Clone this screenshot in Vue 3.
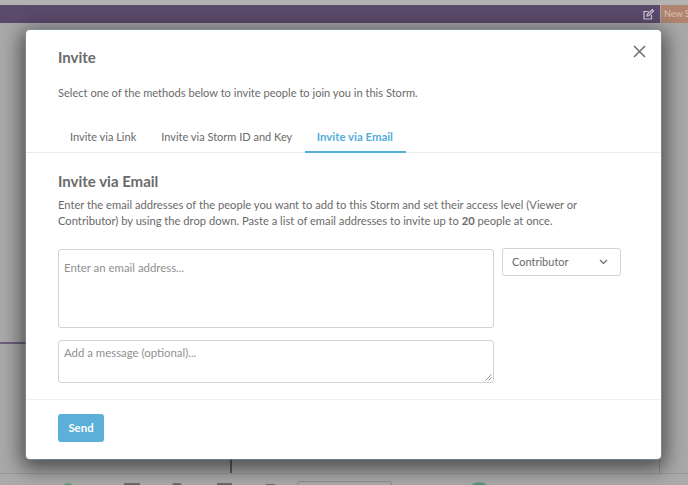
<template>
  <div class="page">
    <header class="topbar">
      <svg class="edit" width="11" height="11" viewBox="0 0 11 11" fill="none" stroke="#cfc9d5" stroke-width="1.2"><path d="M8.5 6V10H1V2.5H5.5" /><path d="M4 7L4.5 5L9.3 0.6L10.5 1.8L5.8 6.6Z" /></svg>
      <span class="new">New S</span>
    </header>
    <div class="backdrop-line"></div>
    <div class="stem"></div>
    <div class="right-rule"></div>
    <footer class="bottombar">
      <span class="dot green"></span>
      <span class="tool t1"></span>
      <span class="tool t2"></span>
      <span class="tool t3"></span>
      <span class="tool t4"></span>
      <span class="field"></span>
      <span class="globe"></span>
    </footer>

    <section class="modal">
      <button class="close" aria-label="Close">
        <svg width="13" height="13" viewBox="0 0 13 13" stroke="#6d6d6d" stroke-width="1.5" fill="none"><path d="M1 1L12 12M12 1L1 12" /></svg>
      </button>
      <div class="head">
        <h2>Invite</h2>
        <p>Select one of the methods below to invite people to join you in this Storm.</p>
      </div>
      <nav class="tabs">
        <a v-for="t in tabs" :key="t" class="tab" :class="{ active: t === active }">{{ t }}</a>
      </nav>
      <div class="body">
        <h3>Invite via Email</h3>
        <p class="desc">Enter the email addresses of the people you want to add to this Storm and set their access level (Viewer or Contributor) by using the drop down. Paste a list of email addresses to invite up to <b>20</b> people at once.</p>
        <div class="form">
          <div class="fields">
            <div class="input emails">Enter an email address...</div>
            <div class="input message">
              Add a message (optional)...
              <svg class="grip" width="7" height="7" viewBox="0 0 7 7" stroke="#777" stroke-width="0.8"><path d="M0.5 6.5L6.5 0.5M3.5 6.5L6.5 3.5" /></svg>
            </div>
          </div>
          <div class="select">
            <span>Contributor</span>
            <svg width="9" height="6" viewBox="0 0 9 6" fill="none" stroke="#6d6d6d" stroke-width="1.2"><path d="M1 1L4.5 4.5L8 1" /></svg>
          </div>
        </div>
      </div>
      <div class="foot">
        <button class="send">Send</button>
      </div>
    </section>
  </div>
</template>

<script setup>
const tabs = ['Invite via Link', 'Invite via Storm ID and Key', 'Invite via Email']
const active = 'Invite via Email'
</script>

<style>
html, body { margin: 0; background: #a9a9a9; overflow: hidden; }
</style>

<style scoped>
.page {
  position: relative;
  width: 688px;
  height: 485px;
  overflow: hidden;
  background: #a9a9a9;
  font-family: "Lato", "Open Sans", sans-serif;
  color: #6a6a6a;
}
.page::before {
  content: "";
  position: absolute;
  left: 0; right: 0; top: 0;
  height: 5px;
  background: #b3b3b3;
}
.topbar {
  box-sizing: border-box;
  height: 18px;
  background: #5b4a6c;
  display: flex;
  align-items: center;
  justify-content: flex-end;
  position: absolute;
  top: 5px; left: 0; right: 0;
}
.edit { margin-right: 6px; }
.new {
  width: 28px;
  height: 18px;
  padding-left: 3px;
  background: #b0846f;
  border-left: 1px solid #a9a9a9;
  font-size: 9px;
  font-weight: 700;
  line-height: 18px;
  color: #d4b5a4;
  white-space: nowrap;
  box-sizing: border-box;
}
.backdrop-line {
  position: absolute;
  left: 0; top: 342px;
  width: 26px; height: 2px;
  background: #6d607b;
}
.stem {
  position: absolute;
  left: 230px; top: 459px;
  width: 2px; height: 14px;
  background: #5f5f68;
}
.right-rule {
  position: absolute;
  left: 659px; top: 459px;
  width: 1px; height: 14px;
  background: #8a8a8a;
}
.bottombar {
  position: absolute;
  left: 0; right: 0; top: 473px; height: 12px;
  border-top: 1px solid #989898;
  background: #ababab;
}
.bottombar span { position: absolute; display: block; }
.dot.green { left: 62px; top: 9px; width: 12px; height: 12px; border-radius: 50%; background: #5f9d77; }
.tool { background: #6b6b6b; }
.t1 { left: 124px; top: 9px; width: 16px; height: 3px; }
.t2 { left: 172px; top: 9px; width: 10px; height: 3px; border-radius: 3px 3px 0 0; }
.t3 { left: 217px; top: 9px; width: 15px; height: 3px; }
.t4 { left: 266px; top: 10px; width: 9px; height: 2px; }
.field { left: 297px; top: 7px; width: 95px; height: 10px; border: 1px solid #8e8e8e; border-radius: 3px; box-sizing: border-box; }
.globe { left: 466px; top: 8px; width: 26px; height: 26px; border-radius: 50%; background: #5f7f8f; border: 2px solid #5f9d77; box-sizing: border-box; }

.modal {
  position: absolute;
  left: 26px; top: 30px;
  width: 635px; height: 429px;
  box-sizing: border-box;
  background: #fff;
  border-radius: 4px;
  box-shadow: 0 0 1px 1px rgba(130, 165, 180, .55), 0 5px 20px 5px rgba(0, 0, 0, .55);
  display: flex;
  flex-direction: column;
}
.close {
  position: absolute;
  top: 15px; right: 15px;
  padding: 0; border: 0; background: none;
  line-height: 0;
}
.head { padding: 17px 32px 0; }
h2 {
  margin: 0;
  font-size: 15px;
  font-weight: 700;
  line-height: 20px;
  color: #6a6a6a;
}
.head p {
  margin: 17px 0 0;
  font-size: 11.1px;
  line-height: 18px;
  color: #6a6a6a;
}
.tabs {
  display: flex;
  gap: 1px;
  height: 37px;
  margin-top: 13px;
  padding-left: 32px;
  border-bottom: 1px solid #ececec;
}
.tab {
  box-sizing: border-box;
  height: 38px;
  padding: 12px 12px 0;
  font-size: 11px;
  line-height: 20px;
  color: #6a6a6a;
}
.tab.active {
  padding: 12px 13px 0 11.5px;
  font-size: 11.4px;
  color: #53aedb;
  font-weight: 700;
  border-bottom: 2px solid #53aedb;
}
.body { padding: 18px 32px 0; flex: 1; }
h3 {
  margin: 0;
  font-size: 15px;
  font-weight: 700;
  line-height: 20px;
  color: #6a6a6a;
}
.desc {
  margin: 6px 0 0;
  font-size: 11.2px;
  line-height: 16px;
  color: #6a6a6a;
}
.desc b { font-weight: 700; }
.form { display: flex; align-items: flex-start; gap: 8px; margin-top: 19px; }
.fields { width: 436px; display: flex; flex-direction: column; gap: 12px; padding-top: 1px; }
.input {
  position: relative;
  box-sizing: border-box;
  border: 1px solid #d3d3d3;
  border-radius: 3px;
  padding: 9px 5px;
  font-size: 11.4px;
  line-height: 18px;
  color: #909090;
}
.emails { height: 79px; }
.message { height: 43px; padding-top: 3px; }
.grip { position: absolute; right: 1px; bottom: 1px; }
.select {
  box-sizing: border-box;
  width: 119px;
  height: 28px;
  border: 1px solid #d3d3d3;
  border-radius: 3px;
  padding: 0 12px 1px 9px;
  display: flex;
  align-items: center;
  justify-content: space-between;
  font-size: 11px;
  color: #6a6a6a;
}
.foot {
  height: 60px;
  box-sizing: border-box;
  border-top: 1px solid #f0f0f0;
  padding: 14px 32px 0;
}
.send {
  display: block;
  width: 46px;
  height: 28px;
  border: 0;
  border-radius: 3px;
  background: #5cafd8;
  color: #fff;
  font-family: inherit;
  font-size: 11.4px;
  font-weight: 700;
  padding: 0 0 2px;
}
</style>
